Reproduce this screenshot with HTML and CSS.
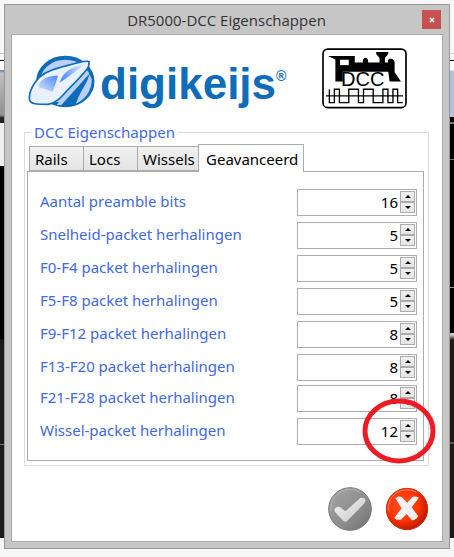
FILE: index.html
```html
<!DOCTYPE html>
<html lang="nl">
<head>
    <meta charset="UTF-8">
    <meta name="viewport" content="width=device-width, initial-scale=1.0">
    <title>DR5000-DCC Eigenschappen</title>
    <link rel="stylesheet" href="styles.css">
</head>
<body>

    <div class="window">
        <header class="titlebar">
            <h1>DR5000-DCC Eigenschappen</h1>
            <button type="button" class="close" aria-label="Sluiten">
                <svg viewBox="0 0 8 8" width="8" height="8"><path d="M2 2 L6 6 M6 2 L2 6" stroke="#fff" stroke-width="1.6"/></svg>
            </button>
        </header>

        <form class="content">
            <div class="logos">
                <div class="brand">
                    <svg class="brand-icon" viewBox="24 46 204 166">
                        <defs>
                            <linearGradient id="glass" x1="0" y1="1" x2="1" y2="0">
                                <stop offset="0" stop-color="#dce8ff"/>
                                <stop offset="1" stop-color="#4a86ff"/>
                            </linearGradient>
                            <linearGradient id="glass-side" x1="0" y1="0.6" x2="1" y2="0.3">
                                <stop offset="0" stop-color="#4a86ff"/>
                                <stop offset="1" stop-color="#e9f0fe"/>
                            </linearGradient>
                            <clipPath id="disc"><ellipse cx="136" cy="129" rx="84" ry="74"/></clipPath>
                        </defs>
                        <ellipse cx="136" cy="129" rx="82" ry="72" fill="#b9d0fb" stroke="#0f6cb8" stroke-width="12"/>
                        <g clip-path="url(#disc)">
                            <path d="M212 92 L100 214 L240 214 L240 92 Z" fill="#0f6cb8"/>
                            <path d="M204 96 L110 200 L124 200 L208 106 Z" fill="#b9d0fb"/>
                            <path d="M208 106 C206 130 184 150 168 196 C196 184 216 156 216 122 Z" fill="#b9d0fb"/>
                        </g>
                        <path d="M208 69 C200 62 150 78 116 88 C76 98 58 112 46 130 C32 150 26 170 28 184 C31 198 50 198 84 198 C108 194 122 178 138 160 C164 134 202 96 206 84 Z" fill="#e9f0fe" stroke="#0f6cb8" stroke-width="5" stroke-linejoin="round"/>
                        <path d="M54 146 C60 122 84 110 114 112 C110 126 104 144 98 160 C84 154 70 150 54 146 Z" fill="url(#glass)"/>
                        <path d="M120 132 C124 114 136 98 158 88 C172 82 190 76 200 74 C178 90 150 112 120 132 Z" fill="url(#glass-side)"/>
                    </svg>
                    <span class="brand-name">digikeijs</span><span class="brand-mark">®</span>
                </div>
                <svg class="dcc" viewBox="36 26 254 182">
                    <rect x="39" y="29" width="248" height="175" rx="14" fill="#fff" stroke="#000" stroke-width="5"/>
                    <path d="M54 50 L134 50 L134 69 L158 69 C156 50 176 50 174 69 L208 69 L208 56 L198 44 L198 38 L234 38 L234 44 L224 56 L224 69 L234 69 C228 54 256 54 253 74 L253 98 L272 126 L238 126 L234 97 L98 97 L98 126 L76 126 L76 60 Z" fill="#000"/>
                    <path d="M90 61 H116 V77 H90 Z" fill="#fff"/>
                    <text class="dcc-text" x="93" y="139">DCC</text>
                    <path d="M48 169 H278" stroke="#000" stroke-width="4"/>
                    <path d="M58 149 V189 H73 V149 H88 V189 H116 V149 H145 V189 H160 V149 H189 V189 H204 V189 H218 V149 H233 V189 H248 V149 H262 V189 H277" fill="none" stroke="#000" stroke-width="4"/>
                </svg>
            </div>

            <fieldset class="group">
                <legend>DCC Eigenschappen</legend>
                <div class="tabs" role="tablist">
                    <button type="button" class="tab" role="tab">Rails</button>
                    <button type="button" class="tab" role="tab">Locs</button>
                    <button type="button" class="tab tab-wide" role="tab">Wissels</button>
                    <button type="button" class="tab active" role="tab" aria-selected="true">Geavanceerd</button>
                </div>
                <div class="panel" role="tabpanel">
                    <div class="fields">
                        <div class="field">
                            <label for="preamble">Aantal preamble bits</label>
                            <div class="spinner">
                                <input type="number" id="preamble" value="16">
                                <div class="arrows"><button type="button" class="up" aria-label="Omhoog"></button><button type="button" class="down" aria-label="Omlaag"></button></div>
                            </div>
                        </div>
                        <div class="field">
                            <label for="snelheid">Snelheid-packet herhalingen</label>
                            <div class="spinner">
                                <input type="number" id="snelheid" value="5">
                                <div class="arrows"><button type="button" class="up" aria-label="Omhoog"></button><button type="button" class="down" aria-label="Omlaag"></button></div>
                            </div>
                        </div>
                        <div class="field">
                            <label for="f0">F0-F4 packet herhalingen</label>
                            <div class="spinner">
                                <input type="number" id="f0" value="5">
                                <div class="arrows"><button type="button" class="up" aria-label="Omhoog"></button><button type="button" class="down" aria-label="Omlaag"></button></div>
                            </div>
                        </div>
                        <div class="field">
                            <label for="f5">F5-F8 packet herhalingen</label>
                            <div class="spinner">
                                <input type="number" id="f5" value="5">
                                <div class="arrows"><button type="button" class="up" aria-label="Omhoog"></button><button type="button" class="down" aria-label="Omlaag"></button></div>
                            </div>
                        </div>
                        <div class="field">
                            <label for="f9">F9-F12 packet herhalingen</label>
                            <div class="spinner">
                                <input type="number" id="f9" value="8">
                                <div class="arrows"><button type="button" class="up" aria-label="Omhoog"></button><button type="button" class="down" aria-label="Omlaag"></button></div>
                            </div>
                        </div>
                        <div class="field">
                            <label for="f13">F13-F20 packet herhalingen</label>
                            <div class="spinner">
                                <input type="number" id="f13" value="8">
                                <div class="arrows"><button type="button" class="up" aria-label="Omhoog"></button><button type="button" class="down" aria-label="Omlaag"></button></div>
                            </div>
                        </div>
                    </div>
                    <div class="fields">
                        <div class="field">
                            <label for="f21">F21-F28 packet herhalingen</label>
                            <div class="spinner">
                                <input type="number" id="f21" value="8">
                                <div class="arrows"><button type="button" class="up" aria-label="Omhoog"></button><button type="button" class="down" aria-label="Omlaag"></button></div>
                            </div>
                        </div>
                        <div class="field">
                            <label for="wissel">Wissel-packet herhalingen</label>
                            <div class="spinner">
                                <input type="number" id="wissel" value="12">
                                <div class="arrows"><button type="button" class="up" aria-label="Omhoog"></button><button type="button" class="down" aria-label="Omlaag"></button></div>
                                <svg class="marker" viewBox="0 0 74 66"><ellipse cx="37" cy="33" rx="34" ry="30" fill="none" stroke="#ed1c24" stroke-width="5"/></svg>
                            </div>
                        </div>
                    </div>
                </div>
            </fieldset>

            <div class="actions">
                <button type="button" class="round" aria-label="OK">
                    <svg viewBox="0 0 132 132">
                        <defs>
                            <linearGradient id="grey" x1="0" y1="0" x2="1" y2="1">
                                <stop offset="0" stop-color="#a6a6a6"/>
                                <stop offset="0.6" stop-color="#8c8c8c"/>
                                <stop offset="1" stop-color="#6e6e6e"/>
                            </linearGradient>
                            <linearGradient id="tick" x1="0" y1="0" x2="1" y2="1">
                                <stop offset="0" stop-color="#f2f2f2"/>
                                <stop offset="1" stop-color="#c8c8c8"/>
                            </linearGradient>
                        </defs>
                        <circle cx="66" cy="66" r="64" fill="url(#grey)" stroke="#7c7c7c" stroke-width="3"/>
                        <path d="M9 72 A58 58 0 0 1 96 15" fill="none" stroke="#b4b4b4" stroke-width="3"/>
                        <path d="M19 68 C20 61 32 56 37 61 L52 73 L96 34 C102 31 114 32 112 43 C111 48 98 60 92 67 L58 101 C54 105 49 105 45 101 L22 76 C20 74 19 71 19 68 Z" fill="url(#tick)"/>
                    </svg>
                </button>
                <button type="button" class="round" aria-label="Annuleren">
                    <svg viewBox="0 0 132 132">
                        <defs>
                            <radialGradient id="red" cx="0.4" cy="0.4" r="0.65">
                                <stop offset="0" stop-color="#ff5228"/>
                                <stop offset="0.6" stop-color="#fb3403"/>
                                <stop offset="1" stop-color="#b81400"/>
                            </radialGradient>
                        </defs>
                        <circle cx="66" cy="66" r="62" fill="url(#red)" stroke="#cf2a0a" stroke-width="3"/>
                        <path d="M10 72 A56 56 0 0 1 94 16" fill="none" stroke="#ff8660" stroke-width="3"/>
                        <path d="M31 34 C38 28 47 27 52 32 L67 47 L81 31 C87 27 96 28 101 33 L80 61 L99 87 C98 93 87 102 80 99 L65 81 L48 98 C41 99 31 98 28 92 L50 64 Z" fill="#f1f1f1"/>
                    </svg>
                </button>
            </div>
        </form>
    </div>

</body>
</html>
```

FILE: styles.css
```css
* {
    box-sizing: border-box;
}
html {
    background: #f7f7f7;
}
body {
    margin: 0;
    padding: 4px 4px 8px;
    font-family: Tahoma, "Noto Sans", sans-serif;
    font-size: 15px;
    color: #000;
    /* the application behind the dialog, left and right edge */
    background:
        linear-gradient(to bottom, #f7f7f7 53px, #ccc 53px, #ccc 54px, #f7f7f7 54px, #f7f7f7 60px, #000 60px, #000 61px, #fff 61px, #fff 70px, #6f8fb0 70px, #6f8fb0 71px, #c0c0c0 73px, #909090 115px, #222 118px, #222 123px, #eee 123px, #eee 166px, #000 166px, #000 339px, #1d1b1a 340px, #1d1b1a 444px, #777 444px, #777 445px, #1d1b1a 445px, #1d1b1a 538px, #f7f7f7 538px) left top / 50% 100% no-repeat,
        linear-gradient(to bottom, #f7f7f7 53px, #ccc 53px, #ccc 54px, #f7f7f7 54px, #f7f7f7 60px, #000 60px, #000 61px, #fff 61px, #fff 70px, #adc4dc 71px, #adc4dc 117px, #000 117px, #000 122px, #777 122px, #777 124px, #000 124px, #000 159px, #777 159px, #777 160px, #000 160px, #000 287px, #999 287px, #999 288px, #000 288px, #000 333px, #ccc 333px, #ccc 335px, #1d1b1a 340px, #1d1b1a 442px, #555 442px, #555 444px, #1d1b1a 444px, #1d1b1a 538px, #f7f7f7 538px) right top / 50% 100% no-repeat;
}
button {
    font: inherit;
    color: inherit;
    padding: 0;
    cursor: pointer;
}
.window {
    background: #c6c6c6;
    border: 1px solid #999;
    padding: 0 6px 6px;
}
.titlebar {
    display: flex;
    align-items: center;
    height: 29px;
    padding-left: 20px;
}
.titlebar h1 {
    flex: 1;
    margin: 0;
    font-family: "Open Sans", sans-serif;
    font-size: 15px;
    font-weight: normal;
    text-align: center;
    color: #333;
}
.close {
    display: flex;
    align-items: center;
    justify-content: center;
    width: 19px;
    height: 19px;
    margin-right: 2px;
    border: none;
    background: #c75050;
}
.content {
    background: #fff;
    border: 1px solid #a9a9a9;
    padding: 13px 13px 10px 12px;
}
.logos {
    display: flex;
    align-items: flex-start;
    justify-content: space-between;
    padding: 0 22px 0 4px;
}
.brand {
    display: flex;
    align-items: center;
    padding-top: 6px;
    color: #0f6cb8;
    font-family: "Liberation Sans", Arial, sans-serif;
    font-weight: bold;
}
.brand-icon {
    width: 68px;
    height: 55px;
    margin-right: 4px;
}
.brand-name {
    padding-top: 4px;
    font-size: 44px;
    line-height: 48px;
}
.brand-mark {
    align-self: flex-start;
    padding-top: 14px;
    font-size: 14px;
    line-height: 16px;
}
.dcc {
    width: 85px;
    height: 61px;
}
.dcc-text {
    font-family: "Liberation Sans", Arial, sans-serif;
    font-size: 60px;
}
.group {
    min-width: 0;
    margin: 12px 0 0;
    padding: 0 4px 4px 2px;
    border: 1px solid #dcdcdc;
}
.group legend {
    margin-left: 4px;
    padding: 0 3px;
    line-height: 22px;
    color: #4169e1;
}
.tabs {
    display: flex;
    align-items: flex-end;
    padding: 1px 0 0 2px;
}
.tab {
    width: 54px;
    height: 25px;
    padding-left: 5px;
    border: 1px solid #acacac;
    border-right: none;
    background: linear-gradient(to bottom, #f0f0f0, #e5e5e5);
    line-height: 22px;
    text-align: left;
}
.tab-wide {
    width: 61px;
}
.tab.active {
    width: 106px;
    height: 28px;
    margin-bottom: -1px;
    padding-left: 7px;
    border-right: 1px solid #acacac;
    border-bottom: none;
    background: #fff;
}
.panel {
    display: grid;
    gap: 4px;
    padding: 17px 6px 15px 12px;
    border: 1px solid #acacac;
}
.fields {
    display: grid;
    gap: 6px;
}
.field {
    display: flex;
    justify-content: space-between;
}
.field label {
    line-height: 25px;
    color: #4169e1;
}
.spinner {
    position: relative;
    display: flex;
    width: 120px;
    height: 27px;
    border: 1px solid #abadb3;
    background: #fff;
}
.spinner input {
    flex: 1;
    min-width: 0;
    height: 23px;
    padding: 0 2px 0 0;
    border: none;
    outline: none;
    background: none;
    font: inherit;
    text-align: right;
    appearance: textfield;
    -moz-appearance: textfield;
}
.spinner input::-webkit-inner-spin-button {
    display: none;
}
.arrows {
    display: flex;
    flex-direction: column;
    width: 16px;
    padding: 1px 1px 2px 0;
}
.arrows button {
    display: flex;
    align-items: center;
    justify-content: center;
    height: 11px;
    border: 1px solid #acacac;
    background: linear-gradient(to bottom, #f0f0f0, #e5e5e5);
}
.arrows button::before {
    content: "";
    border: 3px solid transparent;
}
.arrows .up::before {
    border-top: none;
    border-bottom-color: #000;
}
.arrows .down::before {
    border-bottom: none;
    border-top-color: #000;
}
.marker {
    position: absolute;
    top: -21px;
    right: -20px;
    width: 74px;
    height: 66px;
    pointer-events: none;
}
.actions {
    display: flex;
    justify-content: flex-end;
    gap: 13px;
    margin-top: 21px;
}
.round {
    width: 44px;
    height: 44px;
    border: none;
    border-radius: 50%;
    background: none;
}
.round svg {
    display: block;
}
```
